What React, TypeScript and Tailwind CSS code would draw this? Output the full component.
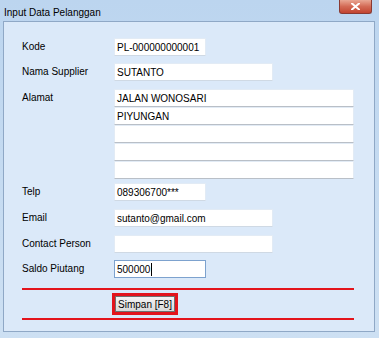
import React from "react";

const Field = ({ value, w, focus }: { value: string; w: string; focus?: boolean }) => (
  <div
    className={`${w} h-[18px] shrink-0 bg-white border ${
      focus ? "border-[#7da2ce]" : "border-[#e2ebf5] border-b-[#cfd9e4]"
    } flex items-center px-[2px] text-[10px] text-black whitespace-nowrap overflow-hidden`}
  >
    {value}
    {focus && <span className="w-px h-[13px] bg-black ml-px" />}
  </div>
);

const Row = ({ label, children, mt }: { label: string; children: React.ReactNode; mt: string }) => (
  <div className={`flex ${mt}`}>
    <div className="w-[92px] h-[17px] shrink-0 flex items-center text-[10px] text-black whitespace-nowrap">
      {label}
    </div>
    {children}
  </div>
);

export default function App() {
  return (
    <div
      className="relative w-[379px] h-[338px] bg-gradient-to-b from-[#bcd5ef] to-[#cde0f3] pt-[21px] pl-[3px] pr-[4px] pb-[6px] overflow-hidden"
      style={{ fontFamily: '"Liberation Sans", Arial, sans-serif' }}
    >
      {/* title bar */}
      <div className="absolute left-[4px] top-[5px] text-[10px] text-black whitespace-nowrap">
        Input Data Pelanggan
      </div>
      <div className="absolute top-0 left-[339px] w-[33px] h-[14px] rounded-b-[3px] border border-t-0 border-[#8a3a32] bg-gradient-to-b from-[#e9a794] via-[#d36a55] to-[#c24430] flex items-center justify-center">
        <svg width="9" height="7" viewBox="0 0 9 7">
          <path d="M1 0.5 L8 6.5 M8 0.5 L1 6.5" stroke="#fff" strokeWidth="2" strokeLinecap="square" />
        </svg>
      </div>

      {/* client area */}
      <div className="h-full border border-[#8fa8c6] bg-[#dbe9f9] pl-[18px] pt-[16px]">
        <Row label="Kode" mt="mt-0">
          <Field value="PL-000000000001" w="w-[92px]" />
        </Row>
        <Row label="Nama Supplier" mt="mt-[7px]">
          <Field value="SUTANTO" w="w-[159px]" />
        </Row>
        <Row label="Alamat" mt="mt-[8px]">
          <div className="w-[240px] shrink-0 flex flex-col bg-white">
            {["JALAN WONOSARI", "PIYUNGAN", "", "", ""].map((v, i) => (
              <div
                key={i}
                className="h-[18px] border border-[#e2ebf5] border-b-[#b9bfc7] flex items-center px-[2px] text-[10px] text-black whitespace-nowrap"
              >
                {v}
              </div>
            ))}
          </div>
        </Row>
        <Row label="Telp" mt="mt-[4px]">
          <Field value="089306700***" w="w-[92px]" />
        </Row>
        <Row label="Email" mt="mt-[8px]">
          <Field value="sutanto@gmail.com" w="w-[159px]" />
        </Row>
        <Row label="Contact Person" mt="mt-[8px]">
          <Field value="" w="w-[159px]" />
        </Row>
        <Row label="Saldo Piutang" mt="mt-[7px]">
          <Field value="500000" w="w-[92px]" focus />
        </Row>

        <div className="mt-[10px] w-[332px] h-[2px] bg-[#e3141c]" />
        <div className="mt-[3px] ml-[90px] w-[66px] h-[22px] border-[3px] border-[#e3141c] flex">
          <div className="flex-1 border border-[#707070] bg-gradient-to-b from-[#f4f4f4] to-[#d9d9d9] flex items-center justify-center text-[10px] text-black whitespace-nowrap">
            Simpan [F8]
          </div>
        </div>
        <div className="mt-[3px] w-[332px] h-[2px] bg-[#e3141c]" />
      </div>
    </div>
  );
}
